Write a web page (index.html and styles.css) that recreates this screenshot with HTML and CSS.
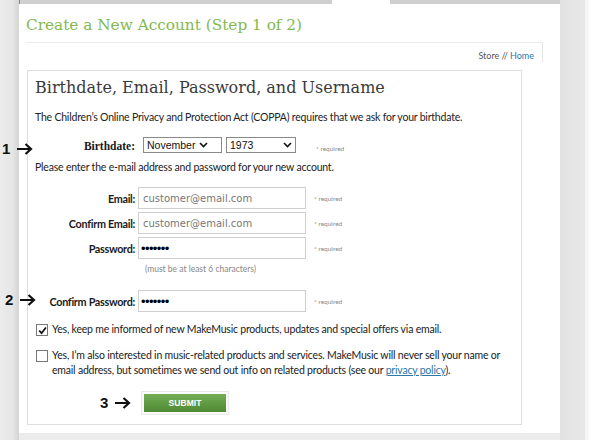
FILE: index.html
```html
<!DOCTYPE html>
<html>
<head>
<meta charset="utf-8">
<link rel="stylesheet" href="styles.css">
</head>
<body>
<div class="side-left"></div>
<div class="panel-col">
  <div class="topband"><div class="tab"></div></div>
  <div class="panel">
    <h1 class="title">Create a New Account (Step 1 of 2)</h1>
    <div class="crumbs">Store // <a class="crumb-link" href="#">Home</a></div>
    <form class="box">
      <h2 class="heading">Birthdate, Email, Password, and Username</h2>
      <p class="para">The Children’s Online Privacy and Protection Act (COPPA) requires that we ask for your birthdate.</p>
      <div class="row row-birth">
        <span class="marker marker-1">1<svg class="arrow" width="17" height="12" viewBox="0 0 17 12"><path d="M1 6 H15 M9.5 1 L15 6 L9.5 11" fill="none" stroke="#111" stroke-width="2.2"/></svg></span>
        <span class="label label-serif">Birthdate:</span>
        <div class="selects">
          <div class="select select-month"><span>November</span><svg class="chev" width="9" height="6" viewBox="0 0 9 6"><path d="M1 1 L4.5 4.5 L8 1" fill="none" stroke="#111" stroke-width="1.6"/></svg></div>
          <div class="select select-year"><span>1973</span><svg class="chev" width="9" height="6" viewBox="0 0 9 6"><path d="M1 1 L4.5 4.5 L8 1" fill="none" stroke="#111" stroke-width="1.6"/></svg></div>
        </div>
        <span class="req req-birth">* required</span>
      </div>
      <p class="para para-2">Please enter the e-mail address and password for your new account.</p>
      <div class="fields">
        <div class="row">
          <span class="label">Email:</span>
          <input class="input" type="text" value="customer@email.com">
          <span class="req">* required</span>
        </div>
        <div class="row">
          <span class="label">Confirm Email:</span>
          <input class="input" type="text" value="customer@email.com">
          <span class="req">* required</span>
        </div>
        <div class="row">
          <span class="label">Password:</span>
          <input class="input input-pw" type="password" value="abcdefg">
          <span class="req">* required</span>
        </div>
      </div>
      <div class="hint">(must be at least 6 characters)</div>
      <div class="row row-cpw">
        <span class="marker marker-2">2<svg class="arrow" width="17" height="12" viewBox="0 0 17 12"><path d="M1 6 H15 M9.5 1 L15 6 L9.5 11" fill="none" stroke="#111" stroke-width="2.2"/></svg></span>
        <span class="label">Confirm Password:</span>
        <input class="input input-pw" type="password" value="abcdefg">
        <span class="req">* required</span>
      </div>
      <div class="check check-1">
        <span class="cbox"><svg width="9" height="9" viewBox="0 0 9 9"><path d="M1.2 4.6 L3.6 7.2 L7.9 1.4" fill="none" stroke="#111" stroke-width="1.7"/></svg></span>
        <span class="check-text">Yes, keep me informed of new MakeMusic products, updates and special offers via email.</span>
      </div>
      <div class="check check-2">
        <span class="cbox"></span>
        <span class="check-text check-text-2">Yes, I’m also interested in music-related products and services. MakeMusic will never sell your name or email address, but sometimes we send out info on related products (see our <a class="link" href="#">privacy policy</a>).</span>
      </div>
      <div class="submit-row">
        <span class="marker-3">3<svg class="arrow" width="17" height="12" viewBox="0 0 17 12"><path d="M1 6 H15 M9.5 1 L15 6 L9.5 11" fill="none" stroke="#111" stroke-width="2.2"/></svg></span>
        <span class="btn-wrap"><button class="btn" type="button">SUBMIT</button></span>
      </div>
    </form>
  </div>
</div>
<div class="side-right"><div class="side-edge"></div></div>
</body>
</html>
```
FILE: styles.css
```css
html, body {
  margin: 0;
  padding: 0;
}
body {
  width: 589px;
  height: 440px;
  overflow: hidden;
  display: flex;
  background: #ececec;
  font-family: Lato, "Liberation Sans", sans-serif;
  color: #222;
}
.side-left {
  width: 19px;
  flex: none;
  background: linear-gradient(to right, #ececec 0%, #e6e6e6 65%, #d4d4d4 100%);
}
.side-right {
  width: 29px;
  flex: none;
  display: flex;
  justify-content: flex-end;
  background: linear-gradient(to right, #e2e2e2, #e9e9e9);
}
.side-edge {
  width: 4px;
  background: #f6f6f6;
}
.panel-col {
  width: 541px;
  flex: none;
  display: flex;
  flex-direction: column;
}
.topband {
  height: 4px;
  background: #cfcfcf;
  border-left: 1px solid #888;
}
.tab {
  margin-left: 312px;
  width: 58px;
  height: 4px;
  background: #fff;
}
.panel {
  background: #fff;
  height: 429px;
  padding: 0 17px 0 7px;
}
.title {
  margin: 11px 0 0;
  font-family: "DejaVu Serif", serif;
  font-weight: normal;
  font-size: 15.3px;
  line-height: 20px;
  color: #84b94f;
  padding-bottom: 7px;
  border-bottom: 1px solid #ececec;
}
.crumbs {
  height: 12px;
  padding: 7px 8px 0 0;
  text-align: right;
  font-size: 9px;
  line-height: 12px;
  color: #555;
  border-right: 1px solid #e6e6e6;
}
.crumb-link {
  color: #2b77a8;
  text-decoration: none;
}
.box {
  margin: 8px 21px 0 1px;
  border: 1px solid #dedede;
  padding: 6px 8px 9px 7px;
  position: relative;
}
.heading {
  margin: 0;
  font-family: "DejaVu Serif", serif;
  font-weight: normal;
  font-size: 16px;
  line-height: 22px;
  color: #3a3a3a;
}
.para {
  margin: 10px 0 0;
  font-size: 10.5px;
  letter-spacing: -0.2px;
  line-height: 16px;
  color: #222;
}
.para-2 {
  margin-top: 6px;
}
.row {
  display: flex;
  align-items: center;
  position: relative;
}
.row-birth {
  margin-top: 12px;
  height: 16px;
}
.label {
  width: 100px;
  flex: none;
  text-align: right;
  font-weight: bold;
  font-size: 10.8px;
  letter-spacing: -0.3px;
  color: #1a1a1a;
}
.label-serif {
  font-family: "Liberation Serif", serif;
  font-size: 11.5px;
  letter-spacing: 0;
  position: relative;
  top: 1px;
}
.selects {
  display: flex;
  gap: 4px;
  margin-left: 8px;
}
.select {
  height: 14px;
  border: 1px solid #8a8a8a;
  display: flex;
  align-items: center;
  font-family: "Liberation Sans", Arial, sans-serif;
  font-size: 10.5px;
  color: #111;
  padding-left: 3px;
  box-sizing: content-box;
}
.select-month {
  width: 74px;
}
.select-month .chev {
  margin-left: auto;
  margin-right: 13px;
}
.select-year {
  width: 65px;
}
.select-year .chev {
  margin-left: auto;
  margin-right: 3px;
}
.req {
  font-size: 6.5px;
  color: #888;
  margin-left: 8px;
}
.req-birth {
  margin-left: 20px;
  position: relative;
  top: 3px;
}
.fields {
  margin-top: 12px;
  display: flex;
  flex-direction: column;
  gap: 3px;
}
.input {
  width: 168px;
  height: 22px;
  box-sizing: border-box;
  margin: 0 0 0 3px;
  border: 1px solid #cfcfcf;
  padding: 0 0 0 4px;
  font-family: "DejaVu Sans", Verdana, sans-serif;
  font-size: 10px;
  color: #777;
  background: #fff;
  outline: none;
}
.input-pw {
  font-family: "Liberation Sans", Arial, sans-serif;
  font-size: 13px;
  color: #000;
  letter-spacing: -0.6px;
  padding-left: 2px;
}
.hint {
  margin: 4px 0 0 110px;
  font-size: 8.5px;
  line-height: 12px;
  color: #888;
}
.row-cpw {
  margin-top: 15px;
}
.marker {
  position: absolute;
  display: flex;
  align-items: center;
  font-family: "Liberation Sans", Arial, sans-serif;
  font-weight: bold;
  font-size: 15px;
  line-height: 16px;
  color: #111;
  white-space: nowrap;
}
.marker-1 {
  left: -33px;
  top: 4px;
}
.marker-2 {
  left: -30px;
  top: 2px;
}
.arrow {
  margin-left: 6px;
  flex: none;
}
.check {
  display: flex;
  align-items: flex-start;
  font-size: 10.5px;
  letter-spacing: -0.2px;
  line-height: 15px;
  color: #1a1a1a;
}
.check-text-2 {
  max-width: 455px;
}
.check-1 {
  margin-top: 10px;
}
.check-2 {
  margin-top: 11px;
}
.cbox {
  width: 10px;
  height: 10px;
  border: 1px solid #777;
  flex: none;
  margin: 2px 4px 0 1px;
  display: flex;
  align-items: center;
  justify-content: center;
  background: #fff;
}
.link {
  color: #2b77a8;
}
.submit-row {
  margin-top: 13px;
  display: flex;
  align-items: center;
  padding-left: 65px;
}
.marker-3 {
  display: flex;
  align-items: center;
  font-family: "Liberation Sans", Arial, sans-serif;
  font-weight: bold;
  font-size: 15px;
  line-height: 16px;
  color: #111;
  width: 41px;
  white-space: nowrap;
}
.btn-wrap {
  display: flex;
  padding: 2px;
  border: 1px solid #e8e8e8;
  background: #fafafa;
}
.btn {
  width: 82px;
  height: 18px;
  border: none;
  padding: 0;
  background: linear-gradient(to bottom, #74ad55, #4d8a33);
  color: #fff;
  font-family: "Liberation Sans", Arial, sans-serif;
  font-weight: bold;
  font-size: 8.5px;
  letter-spacing: 0.1px;
}
```
